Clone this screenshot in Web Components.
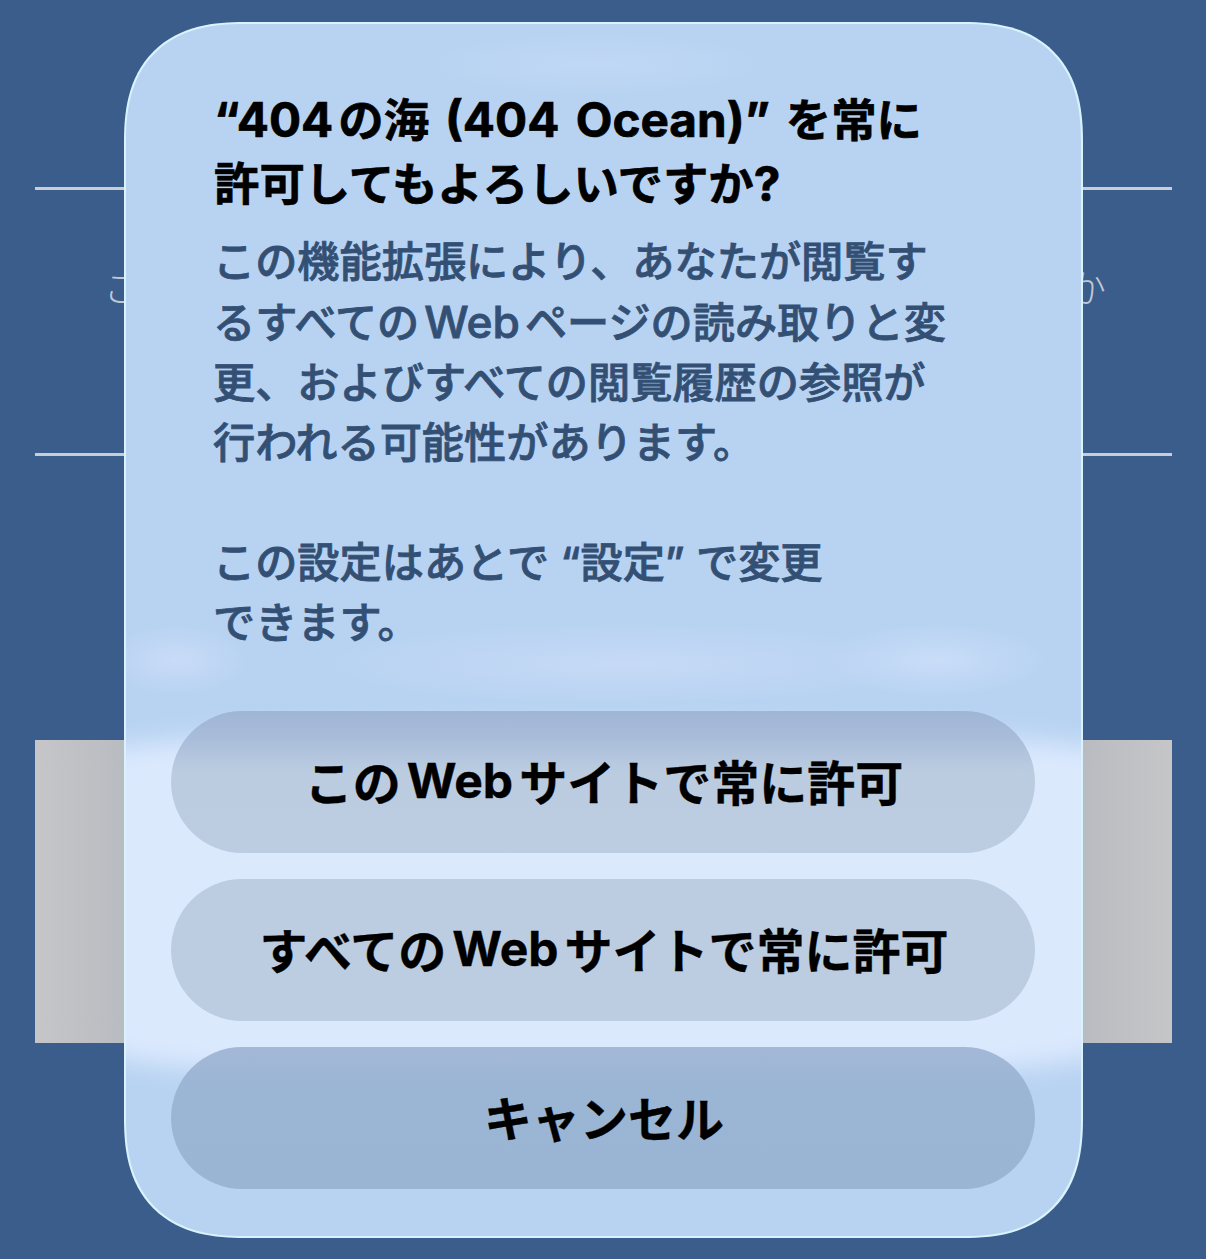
<!DOCTYPE html>
<html lang="ja">
<head>
<meta charset="utf-8">
<title>404 Ocean</title>
<style>
  html, body { margin: 0; padding: 0; background: #3a5d8c; }
  body { width: 1206px; height: 1259px; overflow: hidden; position: relative; }
  permission-dialog i { display: inline-block; width: 5px; }
  permission-dialog em { font-style: normal; font-size: 1.05em; }
  dialog-button b { display: inline-block; width: 6px; }
</style>
</head>
<body>
<page-backdrop></page-backdrop>
<permission-dialog>
  <span slot="title"><em>“404</em><i></i>の海 <em>(404 Ocean)”</em> を常に<br>許可してもよろしいですか<em>?</em></span>
  <span slot="body">この機能拡張により、あなたが閲覧す<br>るすべての<i></i><em>Web</em><i></i>ページの読み取りと変<br>更、およびすべての閲覧履歴の参照が<br>行われる可能性があります。<br><br>この設定はあとで “設定” で変更<br>できます。</span>
  <dialog-button kind="first">この<b></b>Web<b></b>サイトで常に許可</dialog-button>
  <dialog-button>すべての<b></b>Web<b></b>サイトで常に許可</dialog-button>
  <dialog-button kind="cancel">キャンセル</dialog-button>
</permission-dialog>

<script>
class PageBackdrop extends HTMLElement {
  constructor() {
    super();
    this.shadowDOM = this.attachShadow({ mode: "open" });
    this.shadowDOM.innerHTML = `
    <style>
      :host {
        display: flex;
        flex-direction: column;
        box-sizing: border-box;
        width: 1206px;
        height: 1259px;
        padding: 187px 34px 0 35px;
        font-family: "Noto Sans CJK JP", sans-serif;
        font-weight: 300;
        color: #c2c8d2;
      }
      .rule { height: 3px; background: #c9cdd6; flex: none; }
      .text {
        height: 263px;
        box-sizing: border-box;
        padding: 0 66px 0 68px;
        display: flex;
        justify-content: space-between;
        align-items: flex-start;
        font-size: 38px;
        line-height: 192px;
      }
      .box {
        margin-top: 284px;
        height: 303px;
        background: linear-gradient(90deg, #c6c6c9 0, #b8bbc0 8%, #b8bbc0 92%, #c6c6c8 100%);
      }
    </style>
    <div class="rule"></div>
    <div class="text"><span>こ</span><span>か</span></div>
    <div class="rule"></div>
    <div class="box"></div>`;
  }
}

class PermissionDialog extends HTMLElement {
  constructor() {
    super();
    this.shadowDOM = this.attachShadow({ mode: "open" });
    this.shadowDOM.innerHTML = `
    <style>
      :host {
        position: absolute;
        left: 124px;
        top: 22px;
        width: 959px;
        height: 1216px;
        box-sizing: border-box;
        border: 2px solid #d9f3fd;
        border-radius: 120px;
        corner-shape: superellipse(1.3);
        overflow: hidden;
        display: flex;
        flex-direction: column;
        background: #b8d3f2;
        font-family: Inter, "Noto Sans CJK JP", sans-serif;
      }
      .sheen {
        position: absolute;
        left: -40px;
        right: -40px;
        top: 704px;
        height: 356px;
        background: #dbe9fd;
        border-radius: 50% 50% 50% 50% / 30px 30px 40px 40px;
        filter: blur(13px);
      }
      .glow {
        position: absolute;
        left: 0;
        right: 0;
        top: 590px;
        height: 90px;
        background:
          radial-gradient(70px 34px at 50px 46px, #c9dcf7 0, rgba(201,220,247,0) 100%),
          radial-gradient(300px 40px at 500px 50px, #c6daf6 0, rgba(198,218,246,0) 100%),
          radial-gradient(110px 36px at 810px 46px, #c9ddf8 0, rgba(201,221,248,0) 100%);
      }
      .top-glow {
        position: absolute;
        left: 300px;
        top: 10px;
        width: 340px;
        height: 60px;
        background: radial-gradient(closest-side, #c0d8f5 0, rgba(192,216,245,0) 100%);
      }
      .content {
        position: relative;
        display: flex;
        flex-direction: column;
        flex: 1;
        padding: 64px 46px 47px 45px;
      }
      .title {
        margin-left: 43px;
        font-size: 45.4px;
        font-weight: 700;
        line-height: 63px;
        word-spacing: 5px;
        color: #000;
        white-space: nowrap;
        -webkit-text-stroke: 0.7px #000;
      }
      .body {
        margin-top: 16px;
        margin-left: 42px;
        font-size: 42.2px;
        font-weight: 500;
        line-height: 60px;
        color: #335074;
        white-space: nowrap;
        -webkit-text-stroke: 0.8px #335074;
      }
      .actions {
        margin-top: auto;
        display: flex;
        flex-direction: column;
        gap: 26px;
      }
      ::slotted(span) { display: block; }
    </style>
    <div class="top-glow"></div>
    <div class="glow"></div>
    <div class="sheen"></div>
    <div class="content">
      <div class="title"><slot name="title"></slot></div>
      <div class="body"><slot name="body"></slot></div>
      <div class="actions"><slot></slot></div>
    </div>`;
  }
}

class DialogButton extends HTMLElement {
  constructor() {
    super();
    this.shadowDOM = this.attachShadow({ mode: "open" });
    this.shadowDOM.innerHTML = `
    <style>
      :host {
        display: flex;
        align-items: center;
        justify-content: center;
        height: 142px;
        border-radius: 71px;
        padding: 0 0 4px 2px;
        box-sizing: border-box;
        background: #bccde1;
        font-family: Inter, "Noto Sans CJK JP", sans-serif;
        font-size: 48px;
        font-weight: 700;
        color: #000;
        white-space: nowrap;
        -webkit-text-stroke: 0.4px #000;
      }
      :host([kind="first"]) {
        background: linear-gradient(180deg, #a0b6d5 0, #a8bcd9 18%, #bbcce1 42%, #bccde1 100%);
      }
      :host([kind="cancel"]) {
        background: linear-gradient(180deg, #a3b8d6 0, #9bb5d5 32%, #9ab4d4 100%);
      }
    </style>
    <slot></slot>`;
  }
}

customElements.define("page-backdrop", PageBackdrop);
customElements.define("permission-dialog", PermissionDialog);
customElements.define("dialog-button", DialogButton);
</script>
</body>
</html>
